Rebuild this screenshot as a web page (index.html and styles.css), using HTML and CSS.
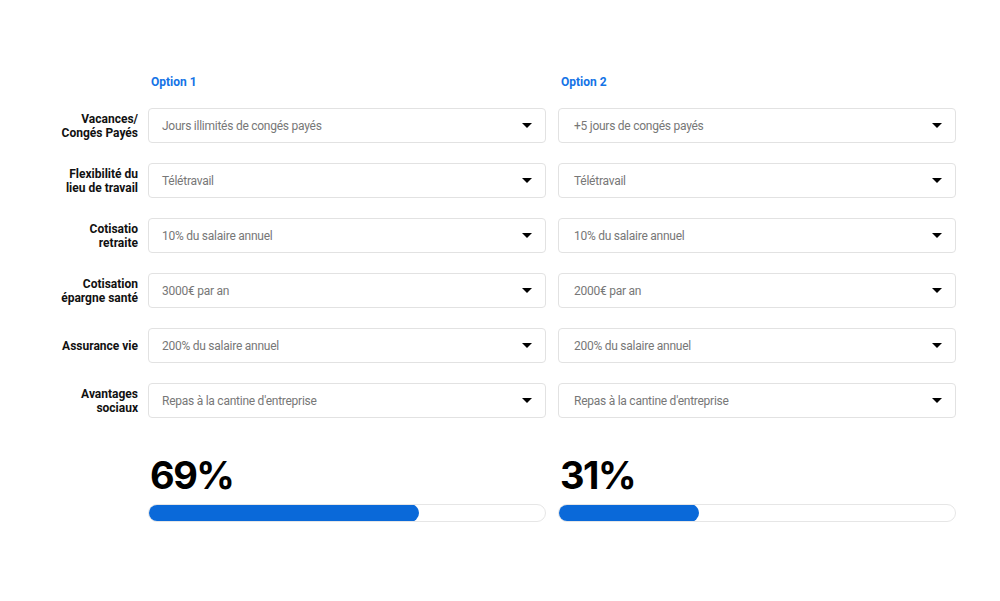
FILE: index.html
```html
<!DOCTYPE html>
<html>
<head>
    <title>Comparaison des avantages</title>
    <link rel="stylesheet" href="styles.css">
</head>
<body>

<div class="compare">
    <div class="grid header-row">
        <div></div>
        <div class="option-title">Option 1</div>
        <div class="option-title">Option 2</div>
    </div>

    <div class="grid rows">
        <div class="row-label">Vacances/<br>Congés Payés</div>
        <div class="select"><span>Jours illimités de congés payés</span><i class="caret"></i></div>
        <div class="select second"><span>+5 jours de congés payés</span><i class="caret"></i></div>

        <div class="row-label">Flexibilité du lieu de travail</div>
        <div class="select"><span>Télétravail</span><i class="caret"></i></div>
        <div class="select second"><span>Télétravail</span><i class="caret"></i></div>

        <div class="row-label">Cotisatio<br>retraite</div>
        <div class="select"><span>10% du salaire annuel</span><i class="caret"></i></div>
        <div class="select second"><span>10% du salaire annuel</span><i class="caret"></i></div>

        <div class="row-label">Cotisation<br>épargne santé</div>
        <div class="select"><span>3000€ par an</span><i class="caret"></i></div>
        <div class="select second"><span>2000€ par an</span><i class="caret"></i></div>

        <div class="row-label">Assurance vie</div>
        <div class="select"><span>200% du salaire annuel</span><i class="caret"></i></div>
        <div class="select second"><span>200% du salaire annuel</span><i class="caret"></i></div>

        <div class="row-label">Avantages<br>sociaux</div>
        <div class="select"><span>Repas à la cantine d'entreprise</span><i class="caret"></i></div>
        <div class="select second"><span>Repas à la cantine d'entreprise</span><i class="caret"></i></div>
    </div>

    <div class="grid results">
        <div></div>
        <div class="result">
            <div class="percent">69%</div>
            <div class="bar"><div class="bar-fill" style="width: 68.5%"></div></div>
        </div>
        <div class="result">
            <div class="percent">31%</div>
            <div class="bar"><div class="bar-fill" style="width: 35.5%"></div></div>
        </div>
    </div>
</div>

</body>
</html>
```

FILE: styles.css
```css
/* Page */
body {
    margin: 0;
    background: #fff;
    font-family: Roboto, "Liberation Sans", sans-serif;
    color: #000;
}

.compare {
    padding: 75px 0 0 36px;
}

/* Shared three column grid */
.grid {
    display: grid;
    grid-template-columns: 100px 398px 398px;
    column-gap: 12px;
}

/* Option headers */
.header-row {
    margin-bottom: 18px;
}

.option-title {
    color: #1473e6;
    font-size: 12px;
    font-weight: 700;
    line-height: 15px;
    padding-left: 3px;
}

/* Rows of selects */
.rows {
    row-gap: 20px;
}

.row-label {
    display: flex;
    align-items: center;
    justify-content: flex-end;
    text-align: right;
    padding-left: 22px;
    margin-right: -2px;
    font-size: 12px;
    font-weight: 700;
    line-height: 14px;
    color: #111;
}

.select {
    height: 35px;
    box-sizing: border-box;
    border: 1px solid #e2e2e2;
    border-radius: 4px;
    display: flex;
    align-items: center;
    justify-content: space-between;
    padding: 0 13px;
    font-size: 12px;
    letter-spacing: -0.25px;
    color: #777;
}

.select.second {
    padding-left: 15px;
}

.caret {
    width: 0;
    height: 0;
    border-left: 5px solid transparent;
    border-right: 5px solid transparent;
    border-top: 5px solid #000;
}

/* Results */
.results {
    margin-top: 36px;
}

.percent {
    font-family: Inter, Roboto, sans-serif;
    font-size: 38px;
    font-weight: 700;
    line-height: 42px;
    letter-spacing: -1.5px;
    padding-left: 2px;
}

.bar {
    margin-top: 8px;
    height: 18px;
    box-sizing: border-box;
    border: 1px solid #e6e6e6;
    border-radius: 9px;
    overflow: hidden;
}

.bar-fill {
    height: 18px;
    margin: -1px;
    background: #0a69d9;
    border-radius: 9px;
}
```
